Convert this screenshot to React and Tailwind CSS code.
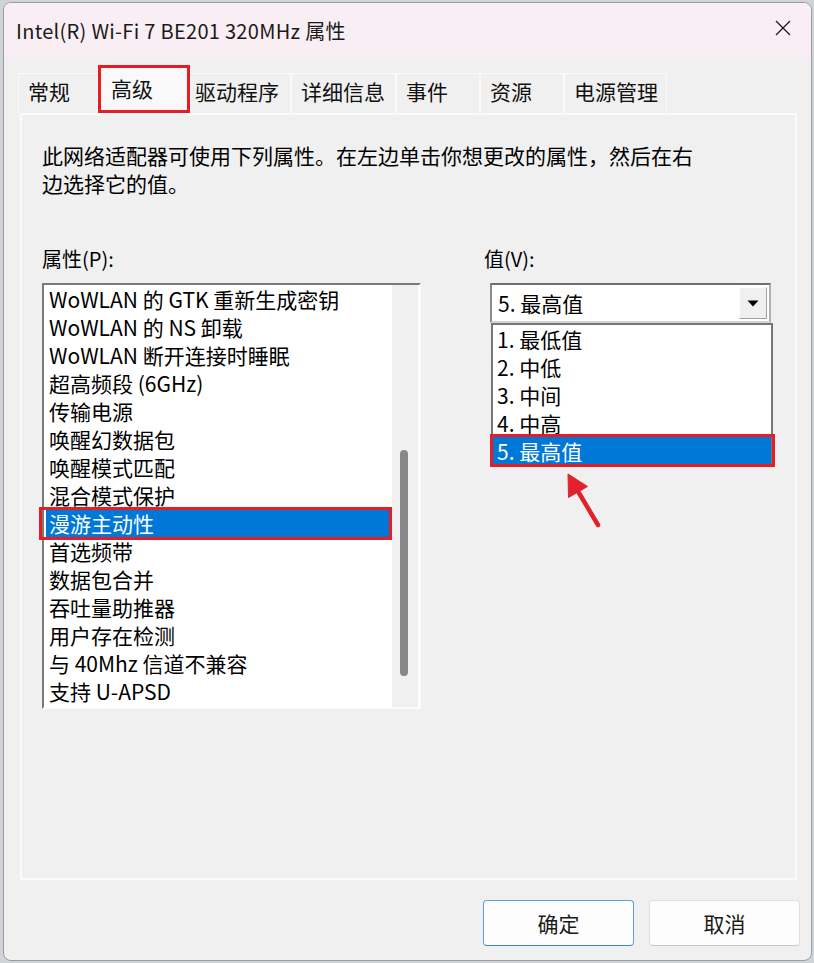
import React from "react";

const props = [
  "WoWLAN 的 GTK 重新生成密钥",
  "WoWLAN 的 NS 卸载",
  "WoWLAN 断开连接时睡眠",
  "超高频段 (6GHz)",
  "传输电源",
  "唤醒幻数据包",
  "唤醒模式匹配",
  "混合模式保护",
  "漫游主动性",
  "首选频带",
  "数据包合并",
  "吞吐量助推器",
  "用户存在检测",
  "与 40Mhz 信道不兼容",
  "支持 U-APSD",
];

const values = ["1. 最低值", "2. 中低", "3. 中间", "4. 中高", "5. 最高值"];

const tabs = [
  { label: "常规", w: "w-[80px]", pl: "pl-[9px]" },
  { label: "高级", w: "w-[92px]", pl: "pl-[10px]", sel: true },
  { label: "驱动程序", w: "w-[101px]", pl: "pl-[4px]" },
  { label: "详细信息", w: "w-[105px]", pl: "pl-[9px]" },
  { label: "事件", w: "w-[84px]", pl: "pl-[9px]" },
  { label: "资源", w: "w-[84px]", pl: "pl-[9px]" },
  { label: "电源管理", w: "w-[103px]", pl: "pl-[9px]" },
];

export default function App() {
  return (
    <div className="relative w-[814px] h-[963px] bg-[#cfd4d9] pt-[2px] pl-[3px] font-['Noto_Sans_CJK_SC',sans-serif] text-[#000]">
      <div className="w-[809px] h-[959px] rounded-[8px] border border-[#9c9c9c] overflow-hidden flex flex-col bg-[#f0f0f0]">
        {/* Title bar */}
        <div className="h-[54px] shrink-0 bg-[#f8eef3] flex items-center justify-between pl-[12px] pr-[20px]">
          <span className="text-[20px] leading-[28px] tracking-[0.3px] text-[#1a1a1a] mt-[2px]">
            Intel(R) Wi-Fi 7 BE201 320MHz 属性
          </span>
          <svg width="16" height="16" viewBox="0 0 16 16" className="mb-[4px]">
            <path d="M1 1 L15 15 M15 1 L1 15" stroke="#1a1a1a" strokeWidth="1.3" fill="none" />
          </svg>
        </div>

        {/* Tabs */}
        <div className="h-[56px] shrink-0 flex items-end pl-[14px]">
          {tabs.map((t) =>
            t.sel ? (
              <div
                key={t.label}
                className={`${t.w} h-[48px] border-[3px] border-[#e81c24] bg-[#f9f9f9] ${t.pl} flex items-start pt-[6px] text-[21px] leading-[28px] text-[#111]`}
              >
                {t.label}
              </div>
            ) : (
              <div
                key={t.label}
                className={`${t.w} h-[40px] border border-b-0 border-[#fafafa] bg-[#f0f0f0] ${t.pl} flex items-center pb-[5px] text-[21px] leading-[28px] text-[#111]`}
              >
                {t.label}
              </div>
            )
          )}
        </div>

        {/* Panel */}
        <div className="ml-[16px] w-[777px] h-[767px] shrink-0 border-2 border-[#fafafa] bg-[#f0f0f0] pl-[20px] pt-[26px]">
          <div className="text-[21px] leading-[28px] w-[660px]">
            此网络适配器可使用下列属性。在左边单击你想更改的属性，然后在右边选择它的值。
          </div>

          <div className="flex mt-[48px]">
            {/* Left column */}
            <div className="w-[379px] flex flex-col">
              <div className="text-[20px] leading-[28px]">属性(P):</div>
              <div className="mt-[10px] w-[379px] h-[426px] border-2 border-t-[#7a7a7a] border-l-[#7a7a7a] border-b-[#fbfbfb] border-r-[#fbfbfb] flex">
                <div className="w-[348px] h-full bg-white flex flex-col">
                  {props.map((p, i) =>
                    i === 8 ? (
                      <div
                        key={p}
                        className="relative ml-[2px] mr-[3px] h-[28px] pl-[3px] bg-[#0078d7] text-white text-[21px] leading-[28px]"
                      >
                        {p}
                        <div className="absolute left-[-7px] right-[-3px] top-[-2px] bottom-[-3px] border-[3px] border-[#e81c24]" />
                      </div>
                    ) : (
                      <div key={p} className="ml-[2px] mr-[3px] h-[28px] pl-[3px] text-[21px] leading-[28px] whitespace-nowrap">
                        {p}
                      </div>
                    )
                  )}
                </div>
                <div className="flex-1 h-full bg-[#f0f0f0] border-r border-[#fdfdfd] pl-[8px] pt-[165px]">
                  <div className="w-[8px] h-[226px] rounded-[4px] bg-[#878787]" />
                </div>
              </div>
            </div>

            {/* Right column */}
            <div className="ml-[63px] flex flex-col">
              <div className="text-[20px] leading-[28px]">值(V):</div>
              <div className="mt-[10px] ml-[6px] w-[281px] h-[40px] border-2 border-t-[#6e6e6e] border-l-[#8a8a8a] border-b-[#d4d4d4] border-r-[#b0b0b0] bg-white flex items-center justify-between pl-[6px] pr-[2px]">
                <span className="text-[21px] leading-[28px]">5. 最高值</span>
                <div className="w-[28px] h-[32px] bg-[#f0f0f0] border border-t-[#fdfdfd] border-l-[#fdfdfd] border-b-[#a0a0a0] border-r-[#a0a0a0] flex items-center justify-center">
                  <svg width="12" height="7" viewBox="0 0 12 7">
                    <path d="M0.5 0.5 L11.5 0.5 L6 6.5 Z" fill="#000" />
                  </svg>
                </div>
              </div>
              <div className="ml-[7px] w-[282px] border-2 border-[#767676] bg-white flex flex-col">
                {values.map((v, i) =>
                  i === 4 ? (
                    <div key={v} className="relative h-[28px] pl-[4px] bg-[#0078d7] text-white text-[21px] leading-[28px]">
                      {v}
                      <div className="absolute left-[-3px] right-[-4px] top-[-3px] bottom-[-2px] border-[3px] border-[#e81c24]" />
                    </div>
                  ) : (
                    <div key={v} className="h-[28px] pl-[4px] text-[21px] leading-[28px]">
                      {v}
                    </div>
                  )
                )}
              </div>
            </div>
          </div>
        </div>

        {/* Buttons */}
        <div className="mt-[20px] flex justify-end gap-[15px] pr-[11px]">
          <button className="w-[151px] h-[46px] rounded-[4px] border border-[#5b9fdd] border-b-[#3f86cc] bg-[#fdfdfd] text-[21px] leading-[28px] text-[#1a1a1a]">
            确定
          </button>
          <button className="w-[151px] h-[46px] rounded-[4px] border border-[#dedede] border-b-[#c8c8c8] bg-[#fdfdfd] text-[21px] leading-[28px] text-[#1a1a1a]">
            取消
          </button>
        </div>
      </div>

      {/* Red annotation arrow */}
      <svg className="absolute left-[555px] top-[465px]" width="55" height="70" viewBox="0 0 55 70">
        <line x1="24" y1="28" x2="43" y2="60" stroke="#e3212b" strokeWidth="4.5" strokeLinecap="round" />
        <path d="M13 9 L32.5 21.5 L13.5 32.5 Z" fill="#e3212b" stroke="#e3212b" strokeWidth="1" strokeLinejoin="round" />
      </svg>
    </div>
  );
}
